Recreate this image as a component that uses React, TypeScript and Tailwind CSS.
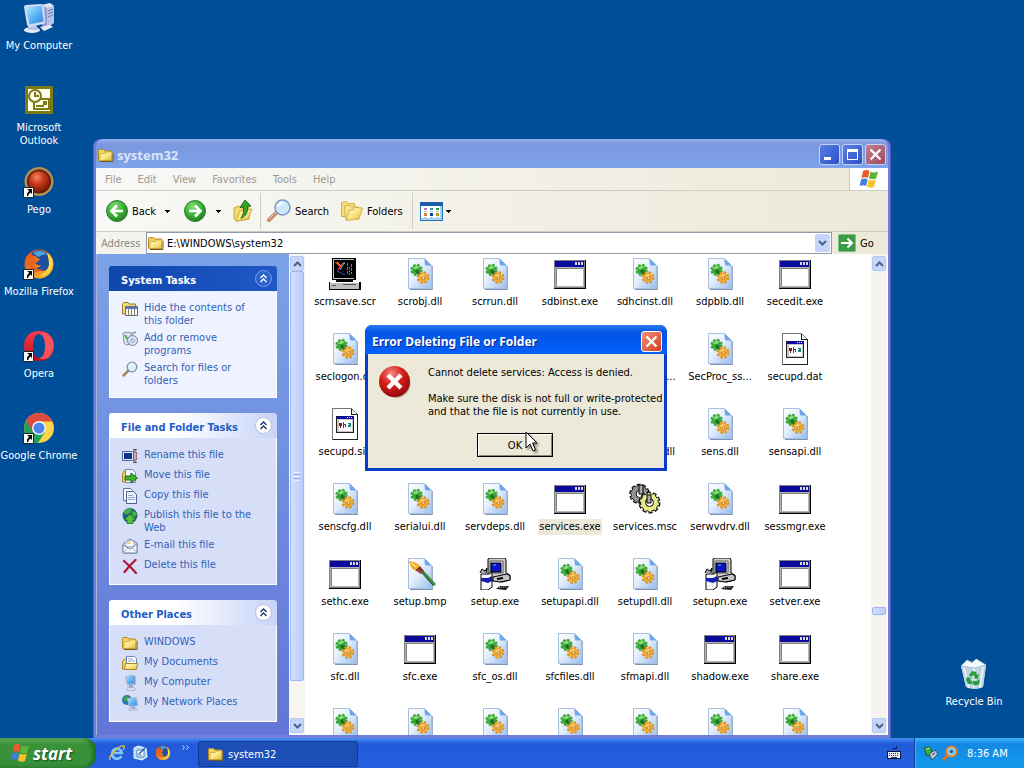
import React from "react";

type IconProps = { className?: string };

function Defs() {
  return (
    <svg className="absolute h-0 w-0" aria-hidden="true">
      <defs>
        <linearGradient id="page" x1="0" y1="0" x2="1" y2="1">
          <stop offset="0" stopColor="#ffffff" />
          <stop offset="0.45" stopColor="#e4effc" />
          <stop offset="1" stopColor="#98bdf0" />
        </linearGradient>
        <linearGradient id="folder" x1="0" y1="0" x2="1" y2="1">
          <stop offset="0" stopColor="#fffbd0" />
          <stop offset="0.5" stopColor="#fbe884" />
          <stop offset="1" stopColor="#e2b43a" />
        </linearGradient>
        <radialGradient id="greenBall" cx="0.4" cy="0.3" r="0.75">
          <stop offset="0" stopColor="#8be07c" />
          <stop offset="0.5" stopColor="#3fb43a" />
          <stop offset="1" stopColor="#1b7d1c" />
        </radialGradient>
        <radialGradient id="redBall" cx="0.4" cy="0.25" r="0.8">
          <stop offset="0" stopColor="#f58a84" />
          <stop offset="0.45" stopColor="#d8201d" />
          <stop offset="1" stopColor="#8c0707" />
        </radialGradient>
        <radialGradient id="pegoBall" cx="0.4" cy="0.3" r="0.8">
          <stop offset="0" stopColor="#f08a68" />
          <stop offset="0.4" stopColor="#c93a1c" />
          <stop offset="1" stopColor="#6f1206" />
        </radialGradient>
        <linearGradient id="screen" x1="0" y1="0" x2="1" y2="1">
          <stop offset="0" stopColor="#c4efff" />
          <stop offset="0.5" stopColor="#5cb9f5" />
          <stop offset="1" stopColor="#2f7fe0" />
        </linearGradient>
        <linearGradient id="foxOrange" x1="0" y1="0" x2="1" y2="1">
          <stop offset="0" stopColor="#e0461b" />
          <stop offset="0.5" stopColor="#f47e1c" />
          <stop offset="1" stopColor="#ffd83c" />
        </linearGradient>
        <linearGradient id="opera" x1="0" y1="0" x2="0" y2="1">
          <stop offset="0" stopColor="#ff3b4a" />
          <stop offset="1" stopColor="#b80d1c" />
        </linearGradient>
      </defs>
    </svg>
  );
}

/* ---------- desktop icons ---------- */

function ComputerIcon({ className }: IconProps) {
  return (
    <svg viewBox="0 0 32 32" className={className}>
      <path d="M19 3l8-2 4 3v17l-8 5-4-2z" fill="#8f9ccc" />
      <path d="M19 3l8-2 4 3-7 2z" fill="#dfe5fa" />
      <path d="M24 6l7-2v17l-7 5z" fill="#b9c3ea" />
      <path d="M25 9l5-2M25 12l5-2M25 15l5-2" stroke="#6a78b4" />
      <ellipse cx="9" cy="28" rx="8" ry="3" fill="#e8ecf8" />
      <path d="M6 22h7l2 6H5z" fill="#b8c4e4" />
      <path d="M17 25l10-2 3 2-9 4z" fill="#e6e9f6" />
      <path d="M1 5q0-2 2-2l15-1q2 0 3 2l1 16q0 2-2 2l-13 3q-2 0-3-2z" fill="#d4dcf2" />
      <path d="M2.500 5.500l16-2 2 16-14 3z" fill="url(#screen)" />
    </svg>
  );
}

function OutlookIcon({ className }: IconProps) {
  return (
    <svg viewBox="0 0 32 32" className={className}>
      <path d="M2 2h28v28H2z" fill="#7d7b12" />
      <path d="M5 5h22v22H5z" fill="#fffef0" />
      <path d="M16 15h10v10H11v-6" fill="#fffef0" stroke="#7d7b12" strokeWidth="2" />
      <circle cx="12" cy="12" r="6" fill="#fffef0" stroke="#7d7b12" strokeWidth="2" />
      <path d="M12 8v4h4M20 18h3v2h-3M13 22h8" fill="none" stroke="#7d7b12" strokeWidth="2" />
    </svg>
  );
}

function Shortcut() {
  return (
    <g>
      <path d="M.5 21.500h10v10h-10z" fill="#fff" stroke="#222" />
      <path d="M4 23h5v5l-1.500-1.500-2 2V30H4v-2.500l2.200-2.700z" fill="#000" />
    </g>
  );
}

function PegoIcon({ className }: IconProps) {
  return (
    <svg viewBox="0 0 32 32" className={className}>
      <circle cx="16" cy="15.500" r="14.500" fill="#b58e55" />
      <circle cx="16" cy="15.500" r="12" fill="#5d1c0c" />
      <circle cx="16" cy="15.500" r="10.500" fill="url(#pegoBall)" />
      <Shortcut />
    </svg>
  );
}

function FoxShape() {
  return (
    <g>
      <circle cx="16" cy="16" r="14.500" fill="url(#foxOrange)" />
      <path d="M8 6c4-5 13-5 17 1 3 5 2 12-2 15-4 2-9 1-11-2 3 0 5-1 6-3-3 1-6-1-6-3 2 0 4-1 5-3-2-1-3-1-4-3-2 0-4-1-5-2z" fill="#1e4f9f" />
      <path d="M10 5c4-3 11-3 14 2-3-1-6 0-8 2-2-1-4-2-6-4z" fill="#49a6dd" />
      <path d="M24 5c5 3 7 9 5 14-2 6-8 10-14 9 6-1 11-6 11-12 0-4-1-7-2-11z" fill="#ffd944" />
      <path d="M3 8c2 1 4 2 7 2 1 2 4 2 4 4-2 1-3 3-2 5 2 3 6 3 8 2-3 4-10 4-13-1-3-4-4-8-4-12z" fill="#e8641c" />
    </g>
  );
}

function FirefoxIcon({ className }: IconProps) {
  return (
    <svg viewBox="0 0 32 32" className={className}>
      <FoxShape />
      <Shortcut />
    </svg>
  );
}

function FirefoxSmall({ className }: IconProps) {
  return (
    <svg viewBox="0 0 32 32" className={className}>
      <FoxShape />
    </svg>
  );
}

function OperaIcon({ className }: IconProps) {
  return (
    <svg viewBox="0 0 32 32" className={className}>
      <path fillRule="evenodd" d="M16 1c9 0 15 6 15 15s-6 15-15 15S1 25 1 16 7 1 16 1zm0 3c-4 0-6 5-6 12s2 12 6 12 6-5 6-12-2-12-6-12z" fill="url(#opera)" />
      <path d="M16 4c3-2 8-2 11 2 5 5 5 14 0 20-3 4-8 4-11 2 4 0 6-5 6-12s-2-12-6-12z" fill="#f4525c" />
      <Shortcut />
    </svg>
  );
}

function ChromeIcon({ className }: IconProps) {
  return (
    <svg viewBox="0 0 32 32" className={className}>
      <circle cx="16" cy="16" r="15" fill="#fbd64b" />
      <path d="M16 16L3 8.500A15 15 0 0 1 29.500 9.500H16z" fill="#dd4b3e" />
      <path d="M3 8.500a15 15 0 0 0 12 22.500l7-11-6-4z" fill="#23a05a" />
      <path d="M3 8.500L10 20l6-10.500z" fill="#dd4b3e" />
      <circle cx="16" cy="16" r="7" fill="#f5f5f5" />
      <circle cx="16" cy="16" r="5.500" fill="#4b86ec" />
      <Shortcut />
    </svg>
  );
}

function RecycleIcon({ className }: IconProps) {
  return (
    <svg viewBox="0 0 32 32" className={className}>
      <path d="M3 8l6-6 5 2 5-3 9 6-3 22q-8 3-17 0z" fill="#d5e4ee" />
      <path d="M3 8l8-1 5 3 12-3-3 22q-8 4-17 0z" fill="#bdd3e4" />
      <path d="M6 9l5 21M25 9l-3 21M16 10v20" stroke="#eef6fb" strokeWidth="1.500" />
      <path d="M3 8l6-6 5 3 4-4 10 6-12 3z" fill="#f6fafc" stroke="#9ab4c8" strokeWidth=".7" />
      <path d="M11 17l3-4 4 1 1 3 2-1-1 5-5-1 2-1-2-2-2 2zM9 19l4 1-1 2 2 1v3h-4l-2-4zM16 23l3 0 2-2 1 3-2 3h-3v1l-3-3 2-3z" fill="#2a9e38" />
    </svg>
  );
}

/* ---------- file icons ---------- */

function PageShape() {
  return (
    <g>
      <path d="M6 31.500h22V8" fill="none" stroke="#7b93ba" strokeWidth="1.500" />
      <path d="M4.500.5h16l7 7v23h-23z" fill="url(#page)" stroke="#a9bfdf" />
      <path d="M20.500.5l7 7h-6q-1-1-1-7z" fill="#6ea6ea" />
    </g>
  );
}

function DllIcon({ className }: IconProps) {
  return (
    <svg viewBox="0 0 32 32" className={className}>
      <PageShape />
      <circle cx="12.500" cy="12" r="5" fill="none" stroke="#3aa637" strokeWidth="2.400" strokeDasharray="2.400 1.530" />
      <circle cx="12.500" cy="12" r="4.800" fill="#3cab38" />
      <path d="M8.500 10.500l4-3 3 1.500-3 2z" fill="#8fdc80" />
      <path d="M11 13l3-2 1 4-2 1z" fill="#1c6b24" />
      <path d="M15 14l3 3" stroke="#1d5a25" strokeWidth="2.500" />
      <circle cx="19" cy="19.500" r="5.200" fill="none" stroke="#d8901c" strokeWidth="2.400" strokeDasharray="2.400 1.680" />
      <circle cx="19" cy="19.500" r="4.800" fill="#eda732" />
      <path d="M16 18l3-2 2 1-3 2z" fill="#ffd77a" />
      <circle cx="19.500" cy="20" r="1.400" fill="#fff3cf" stroke="#a86a10" strokeWidth=".8" />
    </svg>
  );
}

function ExeIcon({ className }: IconProps) {
  return (
    <svg viewBox="0 0 32 32" className={className} shapeRendering="crispEdges">
      <path d="M0 2h32v29H0z" fill="#000" />
      <path d="M0 2h31v28H0z" fill="#808080" />
      <path d="M1 3h29v26H1z" fill="#b4b4b4" />
      <path d="M1 3h29v6H1z" fill="#0a0a9c" />
      <path d="M3 11h26v17H3z" fill="#fff" />
      <path d="M2 10h27v1H3v17H2z" fill="#808080" />
      <path d="M21 4h2v3h-2zM24 4h2v3h-2zM27 4h2v3h-2z" fill="#d8d8d8" />
    </svg>
  );
}

function ScrIcon({ className }: IconProps) {
  return (
    <svg viewBox="0 0 32 32" className={className} shapeRendering="crispEdges">
      <path d="M3 0h24v22H3z" fill="#000" />
      <path d="M4 1h21v20H4z" fill="#c4c4c4" />
      <path d="M5 2h21v18H5z" fill="#000" />
      <path d="M7 4l5 6M9 12l6-8" stroke="#e22" strokeWidth="1.500" />
      <path d="M8 4l4 4" stroke="#e8d820" />
      <path d="M11 12l5-8" stroke="#39c" />
      <path d="M18 5v12M22 6v10" stroke="#22b83a" strokeDasharray="3 1" />
      <path d="M20 9v9" stroke="#cc30c0" strokeDasharray="2 1" />
      <path d="M8 13l8 4" stroke="#2a4be0" />
      <path d="M7 22h17v3H7z" fill="#000" />
      <path d="M0 24h32v8H0z" fill="#000" />
      <path d="M1 24h29v7H1z" fill="#bdbdbd" />
      <path d="M1 24h29v1H1z" fill="#fff" />
      <path d="M3 27h4v1H3zM14 26h13v1H14z" fill="#555" />
    </svg>
  );
}

function DatIcon({ className }: IconProps) {
  return (
    <svg viewBox="0 0 32 32" className={className} shapeRendering="crispEdges">
      <path d="M3.500.5h19l6 6v25h-25z" fill="#fff" stroke="#777" />
      <path d="M22.500.5v6h6" fill="none" stroke="#222" />
      <path d="M28.500 7v24.500H4" fill="none" stroke="#222" />
      <path d="M7 8h18v17H7z" fill="#222" />
      <path d="M8 8h16v16H8z" fill="#c9c9c9" />
      <path d="M8 8h16v3H8z" fill="#0b0b9b" />
      <path d="M10 12h13v11H10z" fill="#fff" />
      <path d="M18 9h1v1h-1zM20 9h1v1h-1zM22 9h1v1h-1z" fill="#eee" />
      <path d="M10 15h3v3h-1v2h-1v-2h-1z" fill="#8a1818" />
      <path d="M14 14h1v2h2v3h-1v-2h-1v3h-1z" fill="#3240a8" />
      <path d="M19 15h3v4h-3v-2h1z" fill="#16877a" />
    </svg>
  );
}

function BmpIcon({ className }: IconProps) {
  return (
    <svg viewBox="0 0 32 32" className={className}>
      <PageShape />
      <path d="M17 14l2-2 13 14q-1 2-3 2z" fill="#3c8d3c" />
      <path d="M17 14l12 13" stroke="#1c4f28" />
      <path d="M11 12l5-4 4 5-3 3z" fill="#7c3a28" />
      <path d="M13 12l4 3" stroke="#c44" strokeWidth="1.500" />
      <path d="M5 3c4 1 8 1 11 5l-5 4C8 12 6 8 5 3z" fill="#f4aa21" />
      <path d="M7 5l5 4" stroke="#fff0a0" strokeWidth="1.500" />
    </svg>
  );
}

function SetupIcon({ className }: IconProps) {
  return (
    <svg viewBox="0 0 32 32" className={className}>
      <path d="M9 1l2-1h15l1 2v13l4 2v5l-8 2-14-2z" fill="#cfcfcf" stroke="#000" />
      <path d="M11 3h13v12H11z" fill="#eee" stroke="#555" />
      <path d="M12 5h10v9H12z" fill="#0b12c8" stroke="#000" />
      <path d="M14 7h3" stroke="#4ac8ff" />
      <path d="M14 19l14-3 3 2v4l-10 2-7-1z" fill="#c4c4c4" stroke="#000" />
      <path d="M18 21l6-1" stroke="#000" strokeWidth="2" />
      <path d="M17 31l4-3h9l-3 4z" fill="#111" />
      <path d="M20 30l2-1h6" stroke="#fff" strokeDasharray="1 1" fill="none" />
      <path d="M2 16h8l3-2v15l-4 3H2z" fill="#f6f6f6" stroke="#000" />
      <path d="M2 20h7v5l-7-2zM9 20l4-2v5l-4 2z" fill="#1420b4" />
      <path d="M1 15l2-4 3 2 2-3-1 5" fill="#aaa" stroke="#000" />
    </svg>
  );
}

function MscIcon({ className }: IconProps) {
  return (
    <svg viewBox="0 0 32 32" className={className}>
      <circle cx="10.500" cy="11" r="8" fill="none" stroke="#000" strokeWidth="4.500" strokeDasharray="3.200 1.800" />
      <circle cx="10.500" cy="11" r="6.500" fill="none" stroke="#000" strokeWidth="4.500" />
      <circle cx="10.500" cy="11" r="6" fill="none" stroke="#949494" strokeWidth="4" />
      <circle cx="10.500" cy="11" r="8" fill="none" stroke="#949494" strokeWidth="2.500" strokeDasharray="1.800 3.200" strokeDashoffset="-.7" />
      <circle cx="10.500" cy="11" r="3.500" fill="#fff" stroke="#000" />
      <path d="M10 2h4v9h-4z" fill="#aaa" stroke="#000" />
      <circle cx="20.500" cy="19.500" r="8.500" fill="none" stroke="#000" strokeWidth="5" strokeDasharray="3.400 1.940" />
      <circle cx="20.500" cy="19.500" r="7" fill="none" stroke="#000" strokeWidth="4.500" />
      <circle cx="20.500" cy="19.500" r="6.500" fill="none" stroke="#eaea8c" strokeWidth="4" />
      <circle cx="20.500" cy="19.500" r="8.500" fill="none" stroke="#eaea8c" strokeWidth="2.500" strokeDasharray="2 3.340" strokeDashoffset="-.7" />
      <circle cx="20.500" cy="19.500" r="4" fill="#fff" stroke="#000" />
      <path d="M18 12h4v8h-4z" fill="#aaa" stroke="#000" />
    </svg>
  );
}

/* ---------- small icons ---------- */

function FolderIcon({ className }: IconProps) {
  return (
    <svg viewBox="0 0 16 16" className={className}>
      <path d="M2 14.500h13V6" fill="none" stroke="#6b5a2a" />
      <path d="M.5 3.500q0-1 1-1h4l1.500 1.500h6q1 0 1 1v8.500H.5z" fill="#f1d35f" stroke="#b28a22" />
      <path d="M1.500 13.500l1-7h5l1-1.500h5.500l-.5 8.500z" fill="url(#folder)" stroke="#c79c2d" strokeWidth=".7" />
    </svg>
  );
}

function DocsIcon({ className }: IconProps) {
  return (
    <svg viewBox="0 0 16 16" className={className}>
      <path d="M.5 6l2-2h3v10H.5z" fill="#f1d35f" stroke="#b28a22" />
      <path d="M4.500 1.500h8l2 2V11h-10z" fill="#fff" stroke="#6d86b4" />
      <path d="M6 4h5M6 6h7" stroke="#93a9cf" />
      <path d="M2.500 14.500l1-6h12l-1 6z" fill="url(#folder)" stroke="#a8862c" />
    </svg>
  );
}

function HideIcon({ className }: IconProps) {
  return (
    <svg viewBox="0 0 16 16" className={className}>
      <path d="M.5 3.500l1.500-2h4l1 1.500h6.500v10H.5z" fill="#f3dc79" stroke="#97793a" />
      <path d="M3.500 5.500h12v9h-12z" fill="#f8f8f4" stroke="#666e7e" />
      <path d="M4 7h11" stroke="#597abf" strokeWidth="2" />
      <path d="M6.500 8v6M9.500 8v6M12.500 8v6" stroke="#8c8165" />
    </svg>
  );
}

function ProgramsIcon({ className }: IconProps) {
  return (
    <svg viewBox="0 0 16 16" className={className}>
      <path d="M1 2l5-1 3 1v11l-5 1-2-2z" fill="#dce6ee" stroke="#8799aa" />
      <path d="M3 4l3 5" stroke="#54a85a" strokeWidth="2" />
      <circle cx="10.500" cy="9.500" r="5" fill="#d4e1f2" stroke="#7587a6" />
      <circle cx="10.500" cy="9.500" r="1.500" fill="#fff" stroke="#7587a6" />
      <path d="M9 3l5-2" stroke="#98a8ba" strokeWidth="2" />
    </svg>
  );
}

function LensIcon({ className }: IconProps) {
  return (
    <svg viewBox="0 0 16 16" className={className}>
      <path d="M1.500 14.500l5-5" stroke="#a18765" strokeWidth="2.500" strokeLinecap="round" />
      <circle cx="10" cy="6" r="4.800" fill="#dbf0fb" stroke="#8390a8" strokeWidth="1.300" />
      <path d="M7.500 5q1-2 3-2" stroke="#fff" fill="none" strokeWidth="1.300" />
    </svg>
  );
}

function RenameIcon({ className }: IconProps) {
  return (
    <svg viewBox="0 0 16 16" className={className}>
      <path d="M.5 3.500h11v9H.5z" fill="#dfe7f6" stroke="#56688f" />
      <path d="M2 5h8v6H2z" fill="#15338c" />
      <path d="M11 1.500h4M13 1.500v13M11 14.500h4" stroke="#4a4a58" fill="none" />
      <path d="M11.500 4h3v8h-3z" fill="#d7a3a6" stroke="#6a4c58" strokeWidth=".7" />
    </svg>
  );
}

function MoveIcon({ className }: IconProps) {
  return (
    <svg viewBox="0 0 16 16" className={className}>
      <path d="M.5 6l2-4h4v12h-6z" fill="#f1d35f" stroke="#a8862c" />
      <path d="M3.500 1.500h7l3 3v10h-10z" fill="#f5f9ff" stroke="#7387ad" />
      <path d="M3 8h6V5l6.500 5-6.500 5v-3H3z" fill="#3db728" stroke="#1c6a14" />
    </svg>
  );
}

function CopyIcon({ className }: IconProps) {
  return (
    <svg viewBox="0 0 16 16" className={className}>
      <path d="M1.500.5h7l2 2v10h-9z" fill="#fff" stroke="#61739a" />
      <path d="M4.500 3.500h7l3 3v9h-10z" fill="#eef4ff" stroke="#4c6190" />
      <path d="M6 7.500h5M6 9.500h7M6 11.500h7" stroke="#90a6d2" />
    </svg>
  );
}

function GlobeIcon({ className }: IconProps) {
  return (
    <svg viewBox="0 0 16 16" className={className}>
      <circle cx="8" cy="7.500" r="7.500" fill="#275f88" />
      <path d="M2 3q4-4 7-2 2 2-1 4-3 2-6 1zM10 4q4-2 5 2l-2 3-3-1z" fill="#3fae46" />
      <path d="M8 6l6 6h-3v3.500H5V12H2z" fill="#54c43c" stroke="#1d6e20" strokeWidth=".8" />
    </svg>
  );
}

function MailIcon({ className }: IconProps) {
  return (
    <svg viewBox="0 0 16 16" className={className}>
      <path d="M1 6l7-5 7 4v10H1z" fill="#cbd6e6" stroke="#77879e" />
      <path d="M4 3.500l7-1 1 6H4z" fill="#fff" stroke="#97a3b8" strokeWidth=".6" />
      <path d="M5 5h4" stroke="#d9a040" />
      <path d="M1 7l7 4 7-5v9H1z" fill="#f2f6fb" stroke="#77879e" />
      <path d="M1 15l5-5M15 14l-5-4" stroke="#a5b2c8" />
    </svg>
  );
}

function DeleteIcon({ className }: IconProps) {
  return (
    <svg viewBox="0 0 16 16" className={className}>
      <path d="M2 3q6 5 12 12M13.500 2Q8 7 2.500 14" stroke="#b3143c" strokeWidth="2.200" fill="none" strokeLinecap="round" />
    </svg>
  );
}

function NetworkIcon({ className }: IconProps) {
  return (
    <svg viewBox="0 0 16 16" className={className}>
      <circle cx="5" cy="5" r="5" fill="#2c72b4" />
      <path d="M1 4q3-4 6-2l-1 3-3 2z" fill="#3da44c" />
      <path d="M5.500 3.500l9-1 1 8-8 1.500z" fill="url(#screen)" stroke="#a9b9d8" />
      <ellipse cx="11" cy="14.500" rx="4.500" ry="1.500" fill="#ccd5e8" stroke="#8b97b0" strokeWidth=".5" />
      <path d="M10 12h3v2h-3z" fill="#96a5c4" />
    </svg>
  );
}

function MonitorIcon({ className }: IconProps) {
  return (
    <svg viewBox="0 0 16 16" className={className}>
      <path d="M3.500 1.500l8-1 1 8-7 1.500z" fill="url(#screen)" stroke="#9fb1d6" />
      <path d="M11.500.5l2 1v8l-2 1z" fill="#8396c2" />
      <path d="M7 10h4v3H7z" fill="#96a5c4" />
      <ellipse cx="9" cy="14" rx="5" ry="1.800" fill="#d5dcec" stroke="#8b97b0" strokeWidth=".5" />
    </svg>
  );
}

function ArrowBall({ dir, className }: { dir: "left" | "right"; className?: string }) {
  return (
    <svg viewBox="0 0 22 22" className={className}>
      <circle cx="11" cy="11" r="10.500" fill="url(#greenBall)" stroke="#2b7d2c" />
      <path
        d={dir === "left" ? "M17 11H6M11 5.500L5.500 11l5.500 5.500" : "M5 11h11M11 5.500l5.500 5.500-5.500 5.500"}
        fill="none"
        stroke="#fff"
        strokeWidth="2.600"
      />
    </svg>
  );
}

function UpFolderIcon({ className }: IconProps) {
  return (
    <svg viewBox="0 0 22 22" className={className}>
      <path d="M2 8l5-2 2 2 8-1v12l-12 2-3-2z" fill="#f4da6c" stroke="#cfa93e" />
      <path d="M4 21l4-10 12-2-4 10z" fill="url(#folder)" stroke="#cfa93e" />
      <path d="M13 0l6 6-3.500.5q1 8-6.500 12 4-6 2.500-11.500L8 7.500z" fill="#36a52c" stroke="#1c6e1c" />
    </svg>
  );
}

function SearchIcon({ className }: IconProps) {
  return (
    <svg viewBox="0 0 24 24" className={className}>
      <path d="M2 21l8-8" stroke="#c98d72" strokeWidth="4" strokeLinecap="round" />
      <path d="M2 20l7-7" stroke="#efc7b2" />
      <circle cx="15.500" cy="8.500" r="7.500" fill="#cdeafb" stroke="#7d98c9" strokeWidth="1.500" />
      <path d="M11 8q1-4 5-4" stroke="#fff" strokeWidth="2" fill="none" />
    </svg>
  );
}

function FoldersIcon({ className }: IconProps) {
  return (
    <svg viewBox="0 0 22 22" className={className}>
      <path d="M.5 2.500l5-1 2 2h6v13h-13z" fill="#f6de7a" stroke="#d3b04c" />
      <path d="M3.500 6l5-1 2 2h7v12h-13z" fill="#f8e48a" stroke="#d3b04c" />
      <path d="M5 20.500L8.500 10l4-.5 1-2 8 .5-3.500 11z" fill="url(#folder)" stroke="#d3b04c" />
    </svg>
  );
}

function ViewsIcon({ className }: IconProps) {
  return (
    <svg viewBox="0 0 23 19" className={className} shapeRendering="crispEdges">
      <path d="M.5.5h22v18H.5z" fill="#fff" stroke="#2472b8" />
      <path d="M0 0h23v4H0z" fill="#1a5fa8" />
      <path d="M20 4h2v14H1v-2h19z" fill="#a8d4f2" />
      <path d="M4 6h3v2H4z" fill="#b47ac0" />
      <path d="M10 6h3v2h-3z" fill="#3c8cc8" />
      <path d="M16 6h3v2h-3z" fill="#2a9a34" />
      <path d="M4 11h3v3H4z" fill="#e08040" />
      <path d="M10 11h3v3h-3z" fill="#123a90" />
      <path d="M16 11h3v3h-3z" fill="#b09a28" />
      <path d="M4 9h3M10 9h3M16 9h3M4 15h3M10 15h3M16 15h3" stroke="#b8c0c8" />
    </svg>
  );
}

function FlagIcon({ className }: IconProps) {
  return (
    <svg viewBox="0 0 20 20" className={className}>
      <path d="M4 2q3-2 6.500 0L9 9Q6 7.500 2.500 9z" fill="#ea5a2a" />
      <path d="M11.500 2.500q3 2 7.500 0l-1.800 7q-4 1.500-7.200-.3z" fill="#62b437" />
      <path d="M2.200 10.200q3-1.500 6.500 0L7 17q-3-1.500-6.500 0z" fill="#3f7fe0" />
      <path d="M9.700 10.500q3 2 7.200.3L15 18q-4 1.500-7-.5z" fill="#f6c22c" />
    </svg>
  );
}

function Caret() {
  return (
    <svg viewBox="0 0 5 3" className="h-[3px] w-[5px]" shapeRendering="crispEdges">
      <path d="M0 0h5L2.500 3z" fill="#000" />
    </svg>
  );
}

function Chevron({ up, className }: { up?: boolean; className?: string }) {
  return (
    <svg viewBox="0 0 9 6" className={className}>
      <path d={up ? "M1 5l3.500-3.500L8 5" : "M1 1l3.500 3.500L8 1"} fill="none" stroke="#4d6185" strokeWidth="2" />
    </svg>
  );
}

function IeIcon({ className }: IconProps) {
  return (
    <svg viewBox="0 0 16 16" className={className}>
      <path d="M12.500 11A5 5 0 1 1 13 8H5" fill="none" stroke="#7cc8ff" strokeWidth="2.600" />
      <path d="M1 15C-1 12 9 0 15 1q1 1-1 4" fill="none" stroke="#e8c040" strokeWidth="1.300" />
    </svg>
  );
}

function ShowDesktopIcon({ className }: IconProps) {
  return (
    <svg viewBox="0 0 16 16" className={className}>
      <path d="M2 3l4-2 8 2 1 9-5 3-8-2z" fill="#b9dcf8" stroke="#e9f6ff" />
      <path d="M5 5h7v7H5z" fill="#f6fbff" stroke="#4a87c8" />
      <path d="M7 9l7-7" stroke="#2c5ea8" strokeWidth="1.500" />
      <path d="M6 10h4" stroke="#4a87c8" />
    </svg>
  );
}

function KeyboardIcon({ className }: IconProps) {
  return (
    <svg viewBox="0 0 14 14" className={className} shapeRendering="crispEdges">
      <path d="M6 4V2h3V0" fill="none" stroke="#0a1c50" />
      <path d="M0 5h14v8H0z" fill="#0a1430" />
      <path d="M1 6h12v6H1z" fill="#e8edf8" />
      <path d="M2 7.500h10M2 9.500h10" stroke="#26345c" strokeDasharray="1 1" />
      <path d="M4 11.500h6" stroke="#26345c" />
    </svg>
  );
}

function SafelyRemoveIcon({ className }: IconProps) {
  return (
    <svg viewBox="0 0 16 16" className={className}>
      <path d="M1 3l6-1 3 7-6 2z" fill="#3faf44" stroke="#145a26" />
      <path d="M3 4l4-1" stroke="#b9f3b4" />
      <path d="M6 9l6-4 3 4-6 6z" fill="#b7c4cf" stroke="#37506b" />
      <path d="M9 10l3-2" stroke="#37506b" />
    </svg>
  );
}

function TraySearchIcon({ className }: IconProps) {
  return (
    <svg viewBox="0 0 16 16" className={className}>
      <path d="M1 15l5-5" stroke="#d8701c" strokeWidth="3" />
      <circle cx="9.500" cy="6.500" r="5" fill="#8acdf4" stroke="#e8862a" strokeWidth="2" />
      <circle cx="9.500" cy="6.500" r="1.800" fill="#2a5f9a" />
    </svg>
  );
}

function ErrorIcon({ className }: IconProps) {
  return (
    <svg viewBox="0 0 32 32" className={className}>
      <circle cx="17" cy="17.500" r="14.500" fill="#000" opacity=".25" />
      <circle cx="15.500" cy="15.500" r="15.500" fill="url(#redBall)" />
      <path d="M9 9l13 13M22 9L9 22" stroke="#fff" strokeWidth="4.400" />
    </svg>
  );
}

function CursorIcon({ className }: IconProps) {
  return (
    <svg viewBox="0 0 13 22" className={className}>
      <path d="M1 1v16l4-4 3 7 2.500-1-3-7H12z" fill="#fff" stroke="#000" />
    </svg>
  );
}

/* ---------- data ---------- */

type FileKind = "dll" | "exe" | "scr" | "dat" | "bmp" | "setup" | "msc";

const fileIcons: Record<FileKind, React.ComponentType<IconProps>> = {
  dll: DllIcon,
  exe: ExeIcon,
  scr: ScrIcon,
  dat: DatIcon,
  bmp: BmpIcon,
  setup: SetupIcon,
  msc: MscIcon,
};

type FileEntry = { name: string; kind: FileKind } | null;
const f = (name: string, kind: FileKind): FileEntry => ({ name, kind });

const files: FileEntry[] = [
  f("scrnsave.scr", "scr"), f("scrobj.dll", "dll"), f("scrrun.dll", "dll"), f("sdbinst.exe", "exe"), f("sdhcinst.dll", "dll"), f("sdpblb.dll", "dll"), f("secedit.exe", "exe"),
  f("seclogon.dll", "dll"), null, null, null, f("SecProc_is...", "dll"), f("SecProc_ss...", "dll"), f("secupd.dat", "dat"),
  f("secupd.sig", "dat"), null, null, null, f("sendmail.dll", "dll"), f("sens.dll", "dll"), f("sensapi.dll", "dll"),
  f("senscfg.dll", "dll"), f("serialui.dll", "dll"), f("servdeps.dll", "dll"), f("services.exe", "exe"), f("services.msc", "msc"), f("serwvdrv.dll", "dll"), f("sessmgr.exe", "exe"),
  f("sethc.exe", "exe"), f("setup.bmp", "bmp"), f("setup.exe", "setup"), f("setupapi.dll", "dll"), f("setupdll.dll", "dll"), f("setupn.exe", "setup"), f("setver.exe", "exe"),
  f("sfc.dll", "dll"), f("sfc.exe", "exe"), f("sfc_os.dll", "dll"), f("sfcfiles.dll", "dll"), f("sfmapi.dll", "dll"), f("shadow.exe", "exe"), f("share.exe", "exe"),
  f("", "dll"), f("", "dll"), f("", "dll"), f("", "dll"), f("", "dll"), f("", "dll"), f("", "dll"),
];

type Task = { label: string; Icon: React.ComponentType<IconProps> };

const systemTasks: Task[] = [
  { label: "Hide the contents of\nthis folder", Icon: HideIcon },
  { label: "Add or remove\nprograms", Icon: ProgramsIcon },
  { label: "Search for files or\nfolders", Icon: LensIcon },
];

const fileTasks: Task[] = [
  { label: "Rename this file", Icon: RenameIcon },
  { label: "Move this file", Icon: MoveIcon },
  { label: "Copy this file", Icon: CopyIcon },
  { label: "Publish this file to the\nWeb", Icon: GlobeIcon },
  { label: "E-mail this file", Icon: MailIcon },
  { label: "Delete this file", Icon: DeleteIcon },
];

const places: Task[] = [
  { label: "WINDOWS", Icon: FolderIcon },
  { label: "My Documents", Icon: DocsIcon },
  { label: "My Computer", Icon: MonitorIcon },
  { label: "My Network Places", Icon: NetworkIcon },
];

const desktopIcons: Task[] = [
  { label: "My Computer", Icon: ComputerIcon },
  { label: "Microsoft\nOutlook", Icon: OutlookIcon },
  { label: "Pego", Icon: PegoIcon },
  { label: "Mozilla Firefox", Icon: FirefoxIcon },
  { label: "Opera", Icon: OperaIcon },
  { label: "Google Chrome", Icon: ChromeIcon },
];

/* ---------- components ---------- */

function DesktopIcon({ label, Icon }: Task) {
  return (
    <button className="flex h-[82px] w-[78px] flex-col items-center gap-[5px]">
      <Icon className="h-8 w-8 shrink-0" />
      <span className="text-center leading-[13px] whitespace-pre text-white">{label}</span>
    </button>
  );
}

function TaskPanel({ title, tasks, primary }: { title: string; tasks: Task[]; primary?: boolean }) {
  return (
    <section className="flex flex-col">
      <div
        className={
          primary
            ? "flex h-[25px] items-center justify-between rounded-t-[3px] bg-linear-to-r from-[#0e47ae] to-[#2157c6] pr-[5px] pl-3 text-white"
            : "flex h-[25px] items-center justify-between rounded-t-[3px] bg-linear-to-r from-white from-40% to-[#c7d3f7] pr-[5px] pl-3 text-[#215dc6]"
        }
      >
        <h2 className="pt-1 font-bold whitespace-nowrap">{title}</h2>
        <button
          aria-label={"Collapse " + title}
          className={
            primary
              ? "flex h-[17px] w-[17px] items-center justify-center rounded-full border border-[#7d9fe6] bg-[#2c64cf] text-white"
              : "flex h-[17px] w-[17px] items-center justify-center rounded-full border border-[#b4bfdc] bg-white text-[#1c3568]"
          }
        >
          <svg viewBox="0 0 9 9" className="h-[9px] w-[9px]">
            <path d="M1.500 4l3-3 3 3M1.500 8l3-3 3 3" fill="none" stroke="currentColor" strokeWidth="1.400" />
          </svg>
        </button>
      </div>
      <ul
        className={
          primary
            ? "flex flex-col gap-1 border border-t-0 border-white bg-[#eff3ff] pt-[10px] pb-[10px] pl-3"
            : "flex flex-col gap-1 border border-t-0 border-white bg-[#d6dff7] pt-[10px] pb-[10px] pl-3"
        }
      >
        {tasks.map(({ label, Icon }) => (
          <li key={label}>
            <a href="#" className="flex gap-[6px] text-[#3161b8]">
              <Icon className="h-4 w-4 shrink-0" />
              <span className="leading-[13px] whitespace-pre">{label}</span>
            </a>
          </li>
        ))}
      </ul>
    </section>
  );
}

function ScrollButton({ up }: { up?: boolean }) {
  return (
    <button
      aria-label={up ? "Scroll up" : "Scroll down"}
      className="flex h-[15px] shrink-0 items-center justify-center rounded-[2px] border border-[#b3c6f4] bg-[#c8d6fb]"
    >
      <Chevron up={up} className="h-[6px] w-[9px]" />
    </button>
  );
}

const thumb =
  "shrink-0 rounded-[2px] border border-[#9db6ee] bg-linear-to-r from-[#d3e0fe] via-[#c6d6fd] to-[#b9cbf9] flex flex-col items-center justify-center gap-px";

function SideScrollbar() {
  return (
    <div className="flex w-4 shrink-0 flex-col bg-[#f6f5f0] px-px py-[2px]">
      <ScrollButton up />
      <div className="flex min-h-0 flex-1 flex-col pb-[37px]">
        <div className={thumb + " min-h-0 flex-1"}>
          <span className="h-px w-[6px] bg-[#eef4fe]" />
          <span className="h-px w-[6px] bg-[#8cb0f8]" />
          <span className="h-px w-[6px] bg-[#eef4fe]" />
          <span className="h-px w-[6px] bg-[#8cb0f8]" />
          <span className="h-px w-[6px] bg-[#eef4fe]" />
        </div>
      </div>
      <ScrollButton />
    </div>
  );
}

function FilesScrollbar() {
  return (
    <div className="flex w-4 shrink-0 flex-col bg-[#f5f4ef] px-px py-[2px]">
      <ScrollButton up />
      <div className="flex min-h-0 flex-1 flex-col justify-end pb-[103px]">
        <div className={thumb + " h-[8px]"} />
      </div>
      <ScrollButton />
    </div>
  );
}

function WindowTitle() {
  const btn = "flex h-[21px] w-[21px] items-center justify-center rounded-[3px] border border-[#c3d2f6]";
  return (
    <header className="flex h-[29px] shrink-0 items-center justify-between rounded-t-[7px] bg-linear-to-b from-[#96aff0] via-[#7a97df] via-20% to-[#7fa3ea] pr-[2px] pl-[2px]">
      <div className="flex items-center gap-[3px] pt-[2px]">
        <FolderIcon className="h-4 w-4" />
        <h1 className="font-['Open_Sans','Noto_Sans',sans-serif] text-[13px] leading-4 font-bold text-[#d8e4f8]">system32</h1>
      </div>
      <div className="flex gap-[2px] pt-[2px]">
        <button aria-label="Minimize" className={btn + " bg-linear-to-br from-[#5b7fe4] to-[#2c50c8]"}>
          <span className="mt-2 mr-1 h-[3px] w-[7px] bg-white" />
        </button>
        <button aria-label="Maximize" className={btn + " bg-linear-to-br from-[#5b7fe4] to-[#2c50c8]"}>
          <span className="h-[11px] w-[11px] border border-t-[3px] border-white" />
        </button>
        <button aria-label="Close" className={btn + " bg-linear-to-br from-[#c08090] to-[#a04a60]"}>
          <svg viewBox="0 0 13 13" className="h-[13px] w-[13px]">
            <path d="M1.500 1.500l10 10M11.500 1.500l-10 10" stroke="#fff" strokeWidth="2.200" />
          </svg>
        </button>
      </div>
    </header>
  );
}

function MenuBar() {
  return (
    <div className="flex h-[23px] shrink-0 border-b border-[#cfccc0] bg-linear-to-r from-[#f8f8f8] to-[#ece9d8]">
      <nav className="flex flex-1 items-center gap-4 pl-[9px] text-[#9c9a90]">
        {["File", "Edit", "View", "Favorites", "Tools", "Help"].map((m) => (
          <button key={m}>{m}</button>
        ))}
      </nav>
      <div className="flex w-[39px] items-center justify-center border-l border-[#cfccc0] bg-white">
        <FlagIcon className="h-5 w-5" />
      </div>
    </div>
  );
}

function ToolBar() {
  return (
    <div className="flex h-[41px] shrink-0 items-center border-b border-[#cfccc0] bg-linear-to-r from-[#f8f8f6] to-[#ece9d8] pl-[10px]">
      <button className="flex items-center gap-1">
        <ArrowBall dir="left" className="h-[22px] w-[22px]" />
        Back
      </button>
      <button aria-label="Back history" className="ml-[9px]"><Caret /></button>
      <button aria-label="Forward" className="ml-[14px]">
        <ArrowBall dir="right" className="h-[22px] w-[22px]" />
      </button>
      <button aria-label="Forward history" className="ml-[10px]"><Caret /></button>
      <button aria-label="Up" className="ml-[11px]">
        <UpFolderIcon className="h-[22px] w-[22px]" />
      </button>
      <div className="mx-[6px] h-9 w-px bg-[#d0cdbf]" />
      <button className="flex items-center gap-1">
        <SearchIcon className="h-6 w-6" />
        Search
      </button>
      <button className="ml-3 flex items-center gap-1">
        <FoldersIcon className="h-[22px] w-[22px]" />
        Folders
      </button>
      <div className="mr-[7px] ml-[9px] h-9 w-px bg-[#d0cdbf]" />
      <button aria-label="Views" className="flex items-center gap-[3px]">
        <ViewsIcon className="h-[19px] w-[23px]" />
        <Caret />
      </button>
    </div>
  );
}

function AddressBar() {
  return (
    <div className="flex h-[22px] shrink-0 items-stretch bg-linear-to-r from-[#f4f3ee] to-[#ece9d8] pl-[5px]">
      <label htmlFor="address" className="flex w-[45px] items-center pt-px text-[#8c8a80]">
        Address
      </label>
      <div className="flex flex-1 items-center border border-[#8f9ba8] bg-white pl-px">
        <FolderIcon className="h-4 w-4 shrink-0" />
        <input
          id="address"
          defaultValue="E:\WINDOWS\system32"
          className="min-w-0 flex-1 bg-transparent pl-[3px] leading-[13px] outline-none"
        />
        <button aria-label="Address history" className="mr-px flex h-[18px] w-[15px] items-center justify-center rounded-[2px] bg-[#c6d4fa]">
          <Chevron className="h-[6px] w-[9px]" />
        </button>
      </div>
      <button className="flex w-[56px] items-center gap-1 pl-[6px]">
        <svg viewBox="0 0 18 18" className="h-[18px] w-[18px]">
          <path d="M.5 1.500q0-1 1-1h15q1 0 1 1v15q0 1-1 1h-15q-1 0-1-1z" fill="#3c9a44" stroke="#7fbf86" />
          <path d="M3 9h11M9.500 4.500L14 9l-4.500 4.500" fill="none" stroke="#fff" strokeWidth="2" />
        </svg>
        Go
      </button>
    </div>
  );
}

function FileGrid() {
  return (
    <main className="grid min-w-0 flex-1 grid-cols-[repeat(auto-fill,75px)] content-start overflow-hidden bg-white pt-1 pl-[2px]">
      {files.map((file, i) => {
        if (!file) return <div key={i} />;
        const Icon = fileIcons[file.kind];
        return (
          <button key={i} className="flex h-[75px] flex-col items-center gap-1 pl-px">
            <Icon className="h-8 w-8 shrink-0" />
            <span
              className={
                file.name === "services.exe"
                  ? "bg-[#ece9d8] px-px leading-4 whitespace-nowrap"
                  : "px-px leading-4 whitespace-nowrap"
              }
            >
              {file.name}
            </span>
          </button>
        );
      })}
    </main>
  );
}

function ExplorerWindow() {
  return (
    <section className="absolute top-[139px] bottom-0 left-[93px] flex w-[798px] flex-col rounded-t-[8px] bg-[#6f7ed8] px-[3px] pb-[3px] shadow-[inset_1px_0_0_#5560c0,inset_-1px_0_0_#4c58c0]">
      <WindowTitle />
      <MenuBar />
      <ToolBar />
      <AddressBar />
      <div className="flex min-h-0 flex-1 border-l border-[#a9b4d8] bg-white pr-px">
        <aside className="flex w-[192px] shrink-0 flex-col gap-[15px] overflow-hidden bg-linear-to-b from-[#7ba2e7] to-[#6375d6] px-3 pt-3">
          <TaskPanel title="System Tasks" tasks={systemTasks} primary />
          <TaskPanel title="File and Folder Tasks" tasks={fileTasks} />
          <TaskPanel title="Other Places" tasks={places} />
        </aside>
        <SideScrollbar />
        <FileGrid />
        <FilesScrollbar />
      </div>
    </section>
  );
}

function ErrorDialog() {
  return (
    <section
      role="alertdialog"
      aria-label="Error Deleting File or Folder"
      className="absolute top-[325px] left-[365px] flex w-[302px] flex-col rounded-t-[7px] bg-[#0a3ccb] px-[3px] pb-[3px]"
    >
      <header className="-mx-[3px] flex h-[29px] items-center justify-between rounded-t-[7px] bg-linear-to-b from-[#2a7cf4] via-[#0054e3] via-25% to-[#0560fb] pr-[5px] pl-[7px]">
        <h2 className="pt-1 font-['Noto_Sans','Open_Sans',sans-serif] text-[12px] leading-4 font-bold text-white [text-shadow:1px_1px_#0a2a90]">
          Error Deleting File or Folder
        </h2>
        <button
          aria-label="Close"
          className="mt-[3px] flex h-[21px] w-[21px] items-center justify-center rounded-[3px] border border-white bg-linear-to-br from-[#f09078] to-[#cf3a14]"
        >
          <svg viewBox="0 0 13 13" className="h-[13px] w-[13px]">
            <path d="M1.500 1.500l10 10M11.500 1.500l-10 10" stroke="#fff" strokeWidth="2.200" />
          </svg>
        </button>
      </header>
      <div className="flex flex-col items-center bg-[#ece9d8] pt-3 pb-[11px]">
        <div className="flex w-full gap-[17px] pl-[11px]">
          <ErrorIcon className="h-8 w-8 shrink-0" />
          <p className="leading-[13px] whitespace-pre">
            {"Cannot delete services: Access is denied.\n\nMake sure the disk is not full or write-protected\nand that the file is not currently in use."}
          </p>
        </div>
        <button className="mt-[15px] mr-[2px] h-6 w-[76px] border border-black bg-[#ece9d8] shadow-[inset_1px_1px_#fff,inset_-1px_-1px_#8a8777]">
          OK
        </button>
      </div>
    </section>
  );
}

function Taskbar() {
  return (
    <footer className="flex h-[30px] shrink-0 items-stretch bg-linear-to-b from-[#4a8df2] via-[#2259d8] via-20% to-[#2560de] text-white">
      <button className="flex w-24 items-center gap-[3px] rounded-r-[12px] bg-linear-to-b from-[#6fbb6c] via-[#3a9239] via-20% to-[#37913a] pl-[10px] font-['Open_Sans','Noto_Sans',sans-serif] text-[17px] font-bold italic shadow-[inset_-3px_0_4px_#1d6a1f] [text-shadow:1px_1px_2px_#1a4a1a]">
        <FlagIcon className="h-5 w-5" />
        start
      </button>
      <nav className="flex w-[102px] items-center gap-[7px] pl-[13px]">
        <button aria-label="Internet Explorer"><IeIcon className="h-4 w-4" /></button>
        <button aria-label="Show desktop"><ShowDesktopIcon className="h-4 w-4" /></button>
        <button aria-label="Firefox"><FirefoxSmall className="h-4 w-4" /></button>
        <button aria-label="More" className="ml-1 self-start pt-[7px]">
          <svg viewBox="0 0 8 5" className="h-[5px] w-2">
            <path d="M.5.5l2 2-2 2M4.500.5l2 2-2 2" fill="none" stroke="#cfe0ff" />
          </svg>
        </button>
      </nav>
      <button className="mt-[3px] mb-px flex w-[160px] items-center gap-1 rounded-[2px] border border-[#143c9c] bg-[#1d4db6] pl-[9px]">
        <FolderIcon className="h-4 w-4" />
        system32
      </button>
      <div className="flex flex-1 items-center justify-end pr-[13px]">
        <KeyboardIcon className="h-[14px] w-[14px]" />
      </div>
      <div className="flex w-[110px] items-center gap-[3px] border-l border-[#0c3c9c] bg-linear-to-b from-[#3fb2f6] via-[#1488e4] via-20% to-[#129aec] pl-[8px] shadow-[inset_1px_0_#3cb4f6]">
        <SafelyRemoveIcon className="h-4 w-4" />
        <TraySearchIcon className="h-4 w-4" />
        <time className="ml-[6px] whitespace-nowrap">8:36 AM</time>
      </div>
    </footer>
  );
}

export default function App() {
  return (
    <div className="flex h-screen flex-col overflow-hidden bg-[#004e98] font-['DejaVu_Sans_Condensed','DejaVu_Sans',sans-serif] text-[11px] leading-[13px] text-black">
      <Defs />
      <div className="relative min-h-0 flex-1">
        <div className="flex flex-col pt-[2px]">
          {desktopIcons.map((d) => (
            <DesktopIcon key={d.label} {...d} />
          ))}
        </div>
        <div className="absolute right-[11px] -bottom-[2px]">
          <DesktopIcon label="Recycle Bin" Icon={RecycleIcon} />
        </div>
        <ExplorerWindow />
        <ErrorDialog />
        <CursorIcon className="absolute top-[431px] left-[525px] h-[22px] w-[13px] drop-shadow-[2px_2px_1px_rgba(0,0,0,0.4)]" />
      </div>
      <Taskbar />
    </div>
  );
}
